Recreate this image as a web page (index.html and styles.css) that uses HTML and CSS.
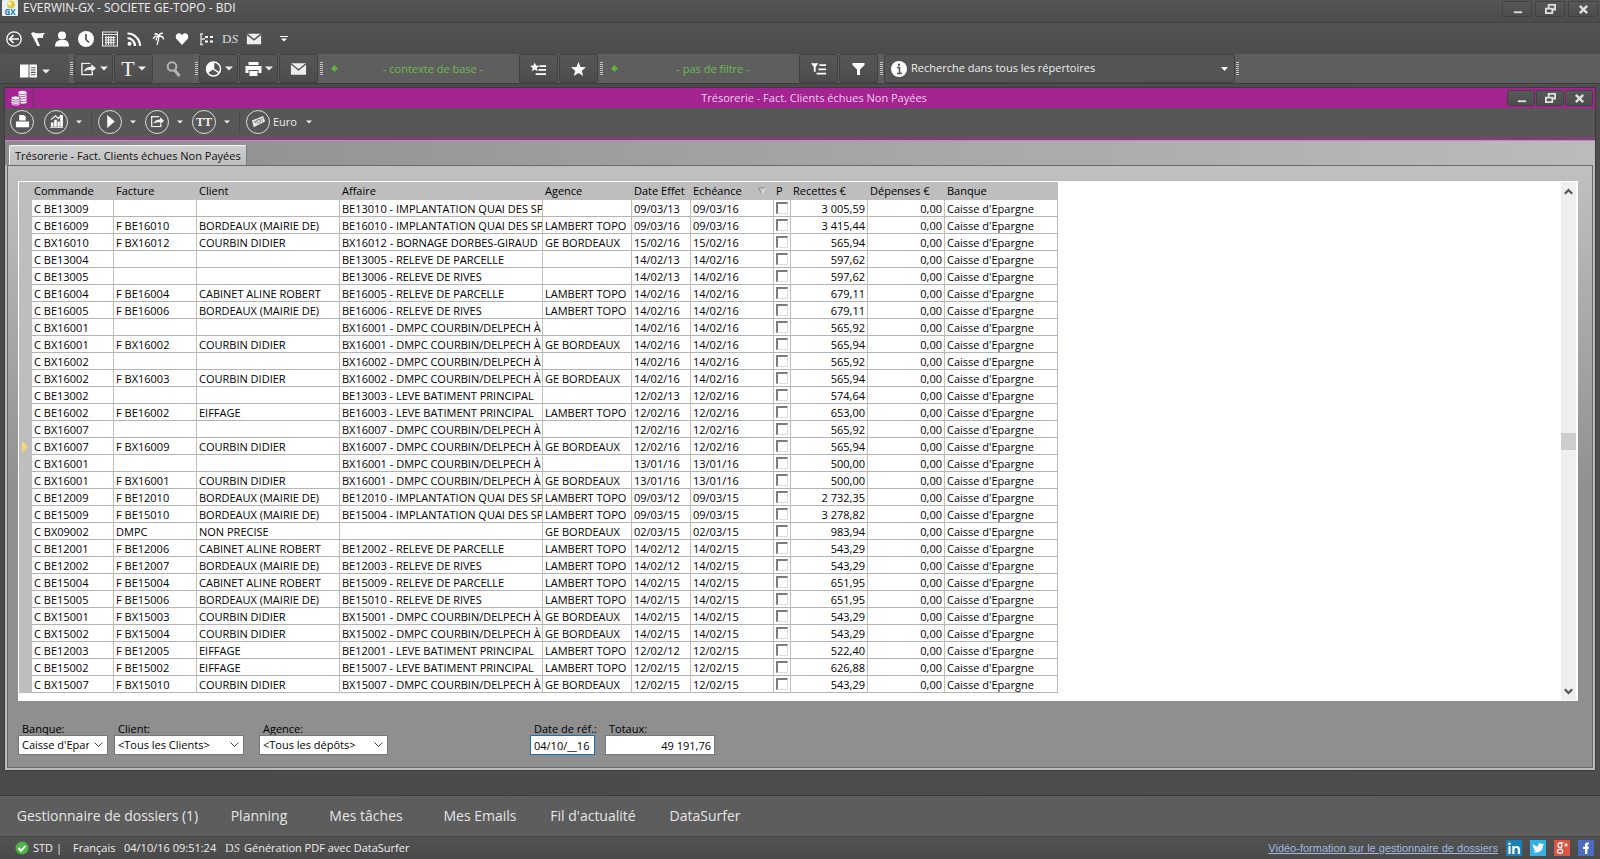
FILE: index.html
```html
<!DOCTYPE html>
<html lang="fr">
<head>
  <meta charset="UTF-8" />
  <meta name="viewport" content="width=device-width, initial-scale=1" />
  <title>EVERWIN-GX - SOCIETE GE-TOPO - BDI</title>
  <link rel="stylesheet" href="styles.css">
</head>
<body>

<svg class="defs" aria-hidden="true">
  <symbol id="i-min" viewBox="0 0 12 12"><path d="M2 8h9v2H2z" fill="currentColor"/></symbol>
  <symbol id="i-restore" viewBox="0 0 12 12"><path d="M4 4V1h7v5H8M1 5h7v5H1z" fill="none" stroke="currentColor" stroke-width="2"/></symbol>
  <symbol id="i-close" viewBox="0 0 12 12"><path d="M2 2l8 8M10 2l-8 8" stroke="currentColor" stroke-width="2.500"/></symbol>
  <symbol id="i-mail" viewBox="0 0 18 14"><path d="M1 1h16v12H1z" fill="currentColor"/><path d="M1 1.500l8 6.500 8-6.500" fill="none" stroke="#505050" stroke-width="1.500"/></symbol>
  <symbol id="i-export" viewBox="0 0 18 14"><path d="M11 1H2v12h11v-3" fill="none" stroke="currentColor" stroke-width="1.500"/><path d="M4 10c1-4 4-5.500 8-5.500V2l5 4.200-5 4.200V8C9 8 6 8 4 10z" fill="currentColor"/></symbol>
  <symbol id="i-caret" viewBox="0 0 8 5"><path d="M0 .5h8L4 4.500z" fill="currentColor"/></symbol>
</svg>

<header class="titlebar">
  <svg class="logo" viewBox="0 0 16 16"><rect width="16" height="16" rx="1" fill="#e9f2f6"/><circle cx="9" cy="4.500" r="4" fill="#e5c93c"/><circle cx="7.500" cy="3.500" r="2" fill="#fbf3b5"/><text x="8" y="15" text-anchor="middle">GX</text></svg>
  <h1>EVERWIN-GX - SOCIETE GE-TOPO - BDI</h1>
  <div class="win-buttons">
    <button aria-label="Réduire"><svg><use href="#i-min"/></svg></button>
    <button aria-label="Restaurer"><svg><use href="#i-restore"/></svg></button>
    <button aria-label="Fermer"><svg><use href="#i-close"/></svg></button>
  </div>
</header>

<nav class="quickbar">
  <button aria-label="Retour"><svg viewBox="0 0 16 16"><circle cx="8" cy="8" r="7.200" fill="none" stroke="#fff" stroke-width="1.300"/><path d="M13 8H4M7.500 4L3.500 8l4 4" fill="none" stroke="#fff" stroke-width="1.700"/></svg></button>
  <button aria-label="Drapeau"><svg viewBox="0 0 16 16"><path d="M1 2.500l2-1.500c3 2 6 1 12.500 1-2 1-3 2.500-2.500 5-2 0-4-1-6 1l3 7H7.500z" fill="#fff"/></svg></button>
  <button aria-label="Contacts"><svg viewBox="0 0 16 16"><circle cx="8" cy="4.500" r="4" fill="#fff"/><path d="M1 15.500c0-5 3-6 5-6.500h4c2 0 5 1 5 6.500z" fill="#fff"/></svg></button>
  <button aria-label="Horloge"><svg viewBox="0 0 16 16"><circle cx="8" cy="8" r="8" fill="#fff"/><path d="M8 3v5.500l3 3" fill="none" stroke="#505050" stroke-width="1.700"/></svg></button>
  <button aria-label="Calendrier"><svg viewBox="0 0 16 16"><path d="M.5 1h15v14H.5zM1 3.500h14M3 6.500h10.500M3 9h10.500M3 11.500h10.500M4 5v9M6.500 5v9M9 5v9M11.500 5v9" fill="none" stroke="#eee" stroke-width="1.200"/></svg></button>
  <button aria-label="Flux"><svg viewBox="0 0 16 16"><circle cx="3.500" cy="12.800" r="2" fill="#fff"/><path d="M1.500 7a8 8 0 0 1 7.500 8M1.500 2.500A12.500 12.500 0 0 1 14 15" fill="none" stroke="#fff" stroke-width="2.200"/></svg></button>
  <button aria-label="Congés"><svg viewBox="0 0 16 16"><path d="M9 5c-.5 4-1 6-2 9M9 5C7 2 5.500 2.500 4.500 3.500M9 5c1-3 3-3 4-2.500M9 5C5.500 4.500 3.500 6 3.500 8M9 5c3 0 4.500 1.500 4.500 3.500M9 5c-2.500 1-3 3-2.500 4.500" fill="none" stroke="#fff" stroke-width="1.300"/></svg></button>
  <button aria-label="Favoris"><svg viewBox="0 0 16 16"><path d="M8 14L2.500 8C0 5 4-.5 8 4c4-4.500 8 1 5.500 4z" fill="#fff"/></svg></button>
  <button aria-label="Arborescence"><svg viewBox="0 0 16 16"><path d="M3 3v11M2 3h3M2 13.500h3M3 8h4" stroke="#ddd" stroke-width="1.300"/><path d="M7 6h3M7 10.500h3M12 6h3M12 10.500h3" stroke="#fff" stroke-width="2"/></svg></button>
  <button class="ds">D<i>S</i></button>
  <button aria-label="Emails"><svg viewBox="0 0 18 14"><use href="#i-mail"/></svg></button>
  <button class="more" aria-label="Personnaliser"><svg viewBox="0 0 8 6"><path d="M0 .5h8" stroke="#fff"/><path d="M1 2.500h6L4 5.500z" fill="#fff"/></svg></button>
</nav>

<div class="toolbar">
  <button class="tool tool-first" aria-label="Volets"><svg class="ico" viewBox="0 0 18 16"><path d="M0 1h9v14H0zM10 1h8v14h-8z" fill="#fff"/><path d="M11.500 4.500h5M11.500 7h5M11.500 9.500h5M11.500 12h5" stroke="#555" stroke-width="1.200"/></svg><svg class="caret"><use href="#i-caret"/></svg></button>
  <span class="grip"></span>
  <button class="tool" aria-label="Exporter"><svg class="ico" viewBox="0 0 18 14"><use href="#i-export"/></svg><svg class="caret"><use href="#i-caret"/></svg></button>
  <button class="tool tool-text" aria-label="Texte">T<svg class="caret"><use href="#i-caret"/></svg></button>
  <button class="tool tool-off" aria-label="Rechercher"><svg class="ico" viewBox="0 0 16 16"><circle cx="6.500" cy="5.500" r="4.300" fill="none" stroke="#b4b4b4" stroke-width="2"/><path d="M9 9l5 6" stroke="#b4b4b4" stroke-width="3"/></svg></button>
  <span class="grip"></span>
  <button class="tool" aria-label="Statistiques"><svg class="ico" viewBox="0 0 16 16"><circle cx="8" cy="8" r="7" fill="#555" stroke="#fff" stroke-width="1.500"/><path d="M8 8V1a7 7 0 0 0-5.500 11z" fill="#fff"/><path d="M8 1v7l6 4" fill="none" stroke="#fff" stroke-width="1.500"/></svg><svg class="caret"><use href="#i-caret"/></svg></button>
  <button class="tool" aria-label="Imprimer"><svg class="ico" viewBox="0 0 16 16"><path d="M3 1h10v3H3zM0 5h16v7h-3V9H3v3H0zM4 10h8v5H4z" fill="#fff"/></svg><svg class="caret"><use href="#i-caret"/></svg></button>
  <button class="tool" aria-label="Envoyer"><svg class="ico" viewBox="0 0 18 14"><use href="#i-mail"/></svg></button>
  <span class="grip"></span>
  <span class="context"><span>- contexte de base -</span></span>
  <button class="tool" aria-label="Liste des contextes"><svg class="ico" viewBox="0 0 18 14"><path d="M5 0l1.400 3.400 3.600.2-2.800 2.300.9 3.600L5 7.500 1.900 9.500l.9-3.600L0 3.600l3.600-.2z" fill="#fff"/><path d="M10 4h7M9 8h8M6 12.500h11" stroke="#fff" stroke-width="1.800"/></svg></button>
  <button class="tool" aria-label="Contexte favori"><svg class="ico" viewBox="0 0 16 16"><path d="M8 1l2 5 5.500.3-4.200 3.500 1.400 5.200L8 12l-4.700 3 1.400-5.200L.5 6.300 6 6z" fill="#fff"/></svg></button>
  <span class="grip"></span>
  <span class="context"><span>- pas de filtre -</span></span>
  <button class="tool" aria-label="Liste des filtres"><svg class="ico" viewBox="0 0 18 14"><path d="M1 1h8L6 5v5H4V5z" fill="#fff"/><path d="M10 3h7M9 7.500h8M7 12h10" stroke="#fff" stroke-width="1.800"/></svg></button>
  <button class="tool" aria-label="Filtrer"><svg class="ico" viewBox="0 0 16 16"><path d="M2 2h12v2l-4.500 4.500V14h-3V8.500L2 4z" fill="#fff"/></svg></button>
  <span class="grip"></span>
  <div class="search">
    <svg class="info" viewBox="0 0 16 16"><circle cx="8" cy="8" r="8" fill="#fff"/><path d="M6 6.500h2.500V12.500M6 12.500h5" fill="none" stroke="#555" stroke-width="1.600"/><circle cx="8" cy="3.700" r="1.200" fill="#555"/></svg>
    <select aria-label="Recherche"><option>Recherche dans tous les répertoires</option></select>
  </div>
  <span class="grip"></span>
</div>

<main class="desktop">
  <section class="window">
    <header class="win-title">
      <span class="coins"><svg viewBox="0 0 18 17"><g fill="#fff" stroke="#9b2790" stroke-width=".8"><path d="M8 3v10c1 2 9 2 9 0V3z"/><ellipse cx="12.500" cy="3" rx="4.500" ry="2"/><path d="M8 5.500c1 2 8 2 9 0M8 8c1 2 8 2 9 0M8 10.500c1 2 8 2 9 0" fill="none"/><path d="M1 8.500v6c1 2.500 9 2.500 9 0v-6z"/><ellipse cx="5.500" cy="8.500" rx="4.500" ry="2"/><path d="M1 11c1 2 8 2 9 0M1 13.300c1 2 8 2 9 0" fill="none"/></g></svg></span>
      <h2>Trésorerie - Fact. Clients échues Non Payées</h2>
      <div class="win-buttons">
        <button aria-label="Réduire"><svg><use href="#i-min"/></svg></button>
        <button aria-label="Restaurer"><svg><use href="#i-restore"/></svg></button>
        <button aria-label="Fermer"><svg><use href="#i-close"/></svg></button>
      </div>
    </header>

    <div class="actions">
      <button class="round" aria-label="Imprimer"><svg viewBox="0 0 16 16"><path d="M4.500 1h5l2 2v4h-7zM1 8h14v6H1z" fill="#fff"/></svg></button>
      <button class="round" aria-label="Graphique"><svg viewBox="0 0 16 16"><path d="M2 9h2.800v4.500H2zM5.500 6h2.800v7.500H5.500zM9 8h2.500v5.500H9zM12 1h2.800v12.500H12zM1 14h14v1H1z" fill="#fff"/><path d="M2 6l5-4 3 3 3-4" fill="none" stroke="#fff" stroke-width="1.200"/></svg></button>
      <button class="drop" aria-label="Plus"><svg class="caret"><use href="#i-caret"/></svg></button>
      <span class="sep"></span>
      <button class="round" aria-label="Lancer"><svg viewBox="0 0 16 16"><path d="M4.500 1l8 7-8 7z" fill="#fff"/></svg></button>
      <button class="drop" aria-label="Plus"><svg class="caret"><use href="#i-caret"/></svg></button>
      <button class="round" aria-label="Exporter"><svg viewBox="0 0 18 14"><use href="#i-export"/></svg></button>
      <button class="drop" aria-label="Plus"><svg class="caret"><use href="#i-caret"/></svg></button>
      <button class="round tt">TT</button>
      <button class="drop" aria-label="Plus"><svg class="caret"><use href="#i-caret"/></svg></button>
      <span class="sep"></span>
      <button class="round" aria-label="Devise"><svg viewBox="0 0 16 16"><path d="M1 7l12-5 2 6-12 6z" fill="#eee"/><path d="M2 9l12-5M4 7l1.500 4M11 4.500l1.500 4" stroke="#777" stroke-width=".7"/><circle cx="8.200" cy="7.700" r="2" fill="none" stroke="#777"/></svg></button>
      <span class="currency">Euro</span>
      <button class="drop" aria-label="Choisir la devise"><svg class="caret"><use href="#i-caret"/></svg></button>
    </div>

    <div class="tabs" role="tablist">
      <button class="tab" role="tab" aria-selected="true">Trésorerie - Fact. Clients échues Non Payées</button>
    </div>

    <div class="panel">
      <div class="grid-box">
        <div class="grid-scroll">
          <table>
            <colgroup>
              <col class="c-mark"><col class="c-cmd"><col class="c-fact"><col class="c-client"><col class="c-aff"><col class="c-agence">
              <col class="c-date"><col class="c-ech"><col class="c-p"><col class="c-amount"><col class="c-amount"><col class="c-bank">
            </colgroup>
            <thead>
              <tr>
                <th></th><th>Commande</th><th>Facture</th><th>Client</th><th>Affaire</th><th>Agence</th><th>Date Effet</th>
                <th><span class="sorted">Echéance<svg viewBox="0 0 8 8"><path d="M.5 1h7L4 7z" fill="#ccc" stroke="#888"/><path d="M7.500 1L4 7" stroke="#fff"/></svg></span></th>
                <th>P</th><th>Recettes €</th><th>Dépenses €</th><th>Banque</th>
              </tr>
            </thead>
            <tbody id="rows"></tbody>
          </table>
        </div>
        <div class="scrollbar">
          <button aria-label="Monter"><svg viewBox="0 0 8 8"><path d="M.7 6L4 2.700 7.300 6" fill="none" stroke="#555" stroke-width="2"/></svg></button>
          <span class="track"></span>
          <span class="thumb"></span>
          <span class="track"></span>
          <button aria-label="Descendre"><svg viewBox="0 0 8 8"><path d="M.7 2L4 5.300 7.300 2" fill="none" stroke="#555" stroke-width="2"/></svg></button>
        </div>
      </div>

      <form class="filters">
        <div class="field f-bank"><label for="banque">Banque:</label><select id="banque"><option>Caisse d'Epargne</option></select></div>
        <div class="field f-client"><label for="client">Client:</label><select id="client"><option>&lt;Tous les Clients&gt;</option></select></div>
        <div class="field f-agence"><label for="agence">Agence:</label><select id="agence"><option>&lt;Tous les dépôts&gt;</option></select></div>
        <div class="field f-date"><label for="date">Date de réf.:</label><input id="date" type="text" value="04/10/__16"></div>
        <div class="field f-total"><label for="total">Totaux:</label><input id="total" type="text" value="49 191,76" readonly></div>
      </form>
    </div>
  </section>
</main>

<nav class="bottom-nav">
  <a href="#">Gestionnaire de dossiers (1)</a>
  <a href="#">Planning</a>
  <a href="#">Mes tâches</a>
  <a href="#">Mes Emails</a>
  <a href="#">Fil d'actualité</a>
  <a href="#">DataSurfer</a>
</nav>

<footer class="status">
  <svg class="ok" viewBox="0 0 14 14"><circle cx="7" cy="7" r="6.500" fill="#4fb446"/><path d="M3.500 7l2.500 2.800 4.500-5" fill="none" stroke="#fff" stroke-width="2"/></svg>
  <span class="std">STD |</span>
  <span class="lang">Français</span>
  <span class="clock">04/10/16 09:51:24</span>
  <span class="ds">D<i>S</i></span>
  <span>Génération PDF avec DataSurfer</span>
  <div class="links">
    <a class="video" href="#">Vidéo-formation sur le gestionnaire de dossiers</a>
    <a href="#" aria-label="LinkedIn"><svg viewBox="0 0 16 16"><path d="M0 0h16v16H0z" fill="#1b7fb8"/><circle cx="3.500" cy="3.800" r="1.300" fill="#fff"/><path d="M2.400 6h2.200v8H2.400zM6.300 6h2.100v1.100C10 5.200 14 5.500 14 9v5h-2.200V9.500c0-2-3.300-2-3.300 0V14H6.300z" fill="#fff"/></svg></a>
    <a href="#" aria-label="Twitter"><svg viewBox="0 0 16 16"><path d="M0 0h16v16H0z" fill="#35b0e6"/><path d="M3 4c1.500 1.600 3 2.300 5 2.400C7.600 3.500 11 2.500 12 4.200L14 3.800l-1 1.700c0 6-6 8.500-10 6.200 1.300 0 2.300-.3 3-.9C4.500 10.500 4 9.800 3.700 9H5C3.300 8.200 3 7 3 6.200l1 .2C2.700 5.500 2.700 4.700 3 4z" fill="#fff"/></svg></a>
    <a href="#" aria-label="Google+"><svg viewBox="0 0 16 16"><path d="M0 0h16v16H0z" fill="#dc5442"/><ellipse cx="6" cy="5.300" rx="2" ry="2.400" fill="none" stroke="#fff" stroke-width="1.200"/><ellipse cx="6" cy="11.300" rx="2.700" ry="2" fill="none" stroke="#fff" stroke-width="1.200"/><path d="M6 2.800h3.500M6.500 7.500c0 1 1 1 1.500 2M10 5h4M12 3v4" fill="none" stroke="#fff"/></svg></a>
    <a href="#" aria-label="Facebook"><svg viewBox="0 0 16 16"><path d="M0 0h16v16H0z" fill="#4c6cc0"/><path d="M7 14V9H5V6.800h2V5c0-2 1.300-2.700 4-2.400v2C9.500 4.500 9.400 4.700 9.400 5.200v1.600H11L10.700 9H9.400v5z" fill="#fff"/></svg></a>
  </div>
</footer>

<script>
  const quai = "IMPLANTATION QUAI DES SPO";
  const dmpc = "DMPC COURBIN/DELPECH À";
  const lt = "LAMBERT TOPO";
  const gb = "GE BORDEAUX";
  const mairie = "BORDEAUX (MAIRIE DE)";
  const courbin = "COURBIN DIDIER";
  const cabinet = "CABINET ALINE ROBERT";

  // commande, facture, client, affaire, agence, date effet, échéance, recettes
  const data = [
    ["C BE13009", "", "", "BE13010 - " + quai, "", "09/03/13", "09/03/16", "3 005,59"],
    ["C BE16009", "F BE16010", mairie, "BE16010 - " + quai, lt, "09/03/16", "09/03/16", "3 415,44"],
    ["C BX16010", "F BX16012", courbin, "BX16012 - BORNAGE DORBES-GIRAUD", gb, "15/02/16", "15/02/16", "565,94"],
    ["C BE13004", "", "", "BE13005 - RELEVE DE PARCELLE", "", "14/02/13", "14/02/16", "597,62"],
    ["C BE13005", "", "", "BE13006 - RELEVE DE RIVES", "", "14/02/13", "14/02/16", "597,62"],
    ["C BE16004", "F BE16004", cabinet, "BE16005 - RELEVE DE PARCELLE", lt, "14/02/16", "14/02/16", "679,11"],
    ["C BE16005", "F BE16006", mairie, "BE16006 - RELEVE DE RIVES", lt, "14/02/16", "14/02/16", "679,11"],
    ["C BX16001", "", "", "BX16001 - " + dmpc, "", "14/02/16", "14/02/16", "565,92"],
    ["C BX16001", "F BX16002", courbin, "BX16001 - " + dmpc, gb, "14/02/16", "14/02/16", "565,94"],
    ["C BX16002", "", "", "BX16002 - " + dmpc, "", "14/02/16", "14/02/16", "565,92"],
    ["C BX16002", "F BX16003", courbin, "BX16002 - " + dmpc, gb, "14/02/16", "14/02/16", "565,94"],
    ["C BE13002", "", "", "BE13003 - LEVE BATIMENT PRINCIPAL", "", "12/02/13", "12/02/16", "574,64"],
    ["C BE16002", "F BE16002", "EIFFAGE", "BE16003 - LEVE BATIMENT PRINCIPAL", lt, "12/02/16", "12/02/16", "653,00"],
    ["C BX16007", "", "", "BX16007 - " + dmpc, "", "12/02/16", "12/02/16", "565,92"],
    ["C BX16007", "F BX16009", courbin, "BX16007 - " + dmpc, gb, "12/02/16", "12/02/16", "565,94"],
    ["C BX16001", "", "", "BX16001 - " + dmpc, "", "13/01/16", "13/01/16", "500,00"],
    ["C BX16001", "F BX16001", courbin, "BX16001 - " + dmpc, gb, "13/01/16", "13/01/16", "500,00"],
    ["C BE12009", "F BE12010", mairie, "BE12010 - " + quai, lt, "09/03/12", "09/03/15", "2 732,35"],
    ["C BE15009", "F BE15010", mairie, "BE15004 - " + quai, lt, "09/03/15", "09/03/15", "3 278,82"],
    ["C BX09002", "DMPC", "NON PRECISE", "", gb, "02/03/15", "02/03/15", "983,94"],
    ["C BE12001", "F BE12006", cabinet, "BE12002 - RELEVE DE PARCELLE", lt, "14/02/12", "14/02/15", "543,29"],
    ["C BE12002", "F BE12007", mairie, "BE12003 - RELEVE DE RIVES", lt, "14/02/12", "14/02/15", "543,29"],
    ["C BE15004", "F BE15004", cabinet, "BE15009 - RELEVE DE PARCELLE", lt, "14/02/15", "14/02/15", "651,95"],
    ["C BE15005", "F BE15006", mairie, "BE15010 - RELEVE DE RIVES", lt, "14/02/15", "14/02/15", "651,95"],
    ["C BX15001", "F BX15003", courbin, "BX15001 - " + dmpc, gb, "14/02/15", "14/02/15", "543,29"],
    ["C BX15002", "F BX15004", courbin, "BX15002 - " + dmpc, gb, "14/02/15", "14/02/15", "543,29"],
    ["C BE12003", "F BE12005", "EIFFAGE", "BE12001 - LEVE BATIMENT PRINCIPAL", lt, "12/02/12", "12/02/15", "522,40"],
    ["C BE15002", "F BE15002", "EIFFAGE", "BE15007 - LEVE BATIMENT PRINCIPAL", lt, "12/02/15", "12/02/15", "626,88"],
    ["C BX15007", "F BX15010", courbin, "BX15007 - " + dmpc, gb, "12/02/15", "12/02/15", "543,29"]
  ];
  const current = 14;

  document.getElementById('rows').innerHTML = data.map((r, i) => {
    const cells = r.slice(0, 7).map(v => `<td>${v}</td>`).join('');
    const mark = i === current ? '<span class="marker"></span>' : '';
    return `<tr><td class="mark">${mark}</td>${cells}` +
      `<td class="check"><input type="checkbox" aria-label="Pointé ${r[0]}"></td>` +
      `<td class="num">${r[7]}</td><td class="num">0,00</td><td>Caisse d'Epargne</td></tr>`;
  }).join('');
</script>
</body>
</html>
```

FILE: styles.css
```css
* {
  box-sizing: border-box;
}

body {
  margin: 0;
  min-height: 100vh;
  display: flex;
  flex-direction: column;
  font-family: "Open Sans", "Noto Sans", sans-serif;
  font-size: 11px;
  line-height: 16px;
  color: #eee;
  background: #4d4d4d;
}

button, input, select {
  font: inherit;
  color: inherit;
  margin: 0;
  padding: 0;
  border: none;
  background: none;
}

h1, h2 {
  margin: 0;
  font-size: 12px;
  font-weight: 400;
}

svg {
  display: block;
}

.defs {
  display: none;
}

/* Barre de titre */
.titlebar {
  height: 23px;
  display: flex;
  align-items: flex-start;
  padding: 0 2px;
  background: linear-gradient(#545454, #4c4c4c);
  border-bottom: 1px solid #424242;
}

.titlebar h1 {
  flex: 1;
  padding-left: 5px;
}

.logo {
  width: 16px;
  height: 16px;
}

.logo text {
  font-size: 8px;
  font-weight: 700;
  fill: #1479b3;
}

.win-buttons {
  display: flex;
  gap: 3px;
  padding-top: 1px;
  color: #e0e0e0;
}

.win-buttons button {
  width: 30px;
  height: 16px;
  display: flex;
  align-items: center;
  justify-content: center;
  border: 1px solid #424242;
  border-radius: 2px;
  background: linear-gradient(#585858, #4c4c4c);
}

.win-buttons svg {
  width: 11px;
  height: 11px;
}

/* Accès rapide */
.quickbar {
  height: 31px;
  display: flex;
  align-items: center;
  padding-left: 2px;
  background: linear-gradient(#535353, #4c4c4c);
}

.quickbar button {
  width: 24px;
  height: 24px;
  display: flex;
  align-items: center;
  justify-content: center;
}

.quickbar svg {
  width: 16px;
  height: 16px;
}

.quickbar .more {
  width: 36px;
}

.quickbar .more svg {
  width: 8px;
  height: 6px;
}

.ds {
  font-family: "Liberation Serif", serif;
  font-size: 12px;
  color: #ddd;
}

.quickbar .ds {
  font-size: 13px;
}

/* Barre d'outils */
.toolbar {
  height: 30px;
  display: flex;
  align-items: stretch;
  background: #5e5e5e;
  border-bottom: 1px solid #3c3c3c;
}

.tool {
  width: 39px;
  margin-right: 1px;
  display: flex;
  align-items: center;
  justify-content: center;
  gap: 3px;
  border: 1px solid #424242;
  border-radius: 2px;
  background: linear-gradient(#575757, #4c4c4c);
}

.tool-first {
  width: 69px;
  margin: 0;
  padding-top: 5px;
  gap: 5px;
  border: none;
  background: linear-gradient(#555, #4f4f4f);
}

.tool-text {
  font-family: "Liberation Serif", serif;
  font-size: 22px;
}

.tool-off {
  border-color: #575757;
  background: #5a5a5a;
}

.ico {
  width: 17px;
  height: 16px;
}

.caret {
  width: 8px;
  height: 5px;
}

.grip {
  width: 3px;
  height: 14px;
  margin: 8px 1px;
  align-self: flex-start;
  background: repeating-linear-gradient(#ccc 0 1px, #555 1px 2px);
}

.context {
  width: 195px;
  display: flex;
  align-items: center;
  padding-left: 8px;
  color: #6dbb4b;
}

.context::before {
  content: "";
  width: 5px;
  height: 5px;
  background: #5cb436;
  transform: rotate(45deg);
}

.context span {
  flex: 1;
  padding-left: 10px;
  text-align: center;
}

.search {
  width: 351px;
  display: flex;
  align-items: center;
  gap: 4px;
  padding: 0 6px;
  border: 1px solid #424242;
  border-radius: 2px;
  background: #545454;
}

.info {
  width: 16px;
  height: 16px;
}

select {
  appearance: none;
  background: no-repeat right center;
  border-radius: 0;
}

.search select {
  flex: 1;
  height: 24px;
  padding-bottom: 1px;
  background-image: url("data:image/svg+xml,%3Csvg xmlns='http://www.w3.org/2000/svg' width='7' height='4'%3E%3Cpath d='M0 0h7L3.500 4z' fill='%23fff'/%3E%3C/svg%3E");
}

/* Fenêtre */
.desktop {
  flex: 1;
  display: flex;
  padding: 3px 4px 24px;
  border-bottom: 1px solid #3a3a3a;
  background: linear-gradient(90deg, #4a4a4a, #4d4d4d);
}

.window {
  flex: 1;
  min-width: 0;
  display: flex;
  flex-direction: column;
  border: 1px solid #3c3c3c;
  background: #bbb;
}

.win-title {
  height: 20px;
  display: grid;
  grid-template-columns: 28px 1fr auto 1fr;
  padding: 0 2px;
  background: #a32390;
  color: #f2cdec;
}

.win-title h2 {
  grid-column: 3;
  font-size: 11px;
  line-height: 20px;
}

.coins {
  padding-left: 3px;
  border-right: 3px solid #8a2d7d;
}

.coins svg {
  width: 18px;
  height: 18px;
  margin-top: 1px;
}

.win-title .win-buttons {
  justify-self: end;
  gap: 1px;
  padding-top: 2px;
}

.win-title .win-buttons button {
  width: 28px;
}

.actions {
  height: 32px;
  display: flex;
  align-items: center;
  padding: 0 5px 2px;
  background: #575757;
  border-bottom: 3px solid #7d3f75;
}

.round {
  width: 24px;
  height: 24px;
  display: flex;
  align-items: center;
  justify-content: center;
  border: 1px solid #ddd;
  border-radius: 50%;
}

.round + .round {
  margin-left: 10px;
}

.round svg {
  width: 15px;
  height: 15px;
}

.round.tt {
  font-family: "Liberation Serif", serif;
  font-size: 12px;
  font-weight: 700;
}

.drop {
  width: 23px;
  height: 24px;
  display: flex;
  align-items: center;
  justify-content: center;
  padding-right: 2px;
}

.drop .caret {
  width: 6px;
  height: 4px;
}

.sep {
  width: 7px;
  height: 22px;
  border-left: 1px solid #4a4a4a;
}

.currency {
  padding: 0 2px 0 3px;
}

.tabs {
  height: 25px;
  padding: 4px 4px 0;
  background: linear-gradient(90deg, #8c8c8c, #bbb);
  border-top: 1px solid #b98fb3;
}

.tab {
  height: 20px;
  padding: 0 5px;
  color: #111;
  background: linear-gradient(#cfcfcf, #bebebe);
  border: 1px solid #6f8080;
  border-top-color: #f4f4f4;
  border-left-color: #f4f4f4;
  border-bottom: none;
  border-radius: 2px 2px 0 0;
}

.panel {
  flex: 1;
  margin: 0 2px 2px;
  padding: 15px 14px 12px 10px;
  display: flex;
  flex-direction: column;
  color: #000;
  background: linear-gradient(#bfbfbf, #bdbdbd 4%, #8f8f8f 55%);
  border: 1px solid #6a6a6a;
}

/* Grille */
.grid-box {
  flex: 1;
  min-height: 519px;
  display: flex;
  background: #fff;
  border: 1px solid #fff;
}

.grid-scroll {
  flex: 1;
  min-width: 0;
  overflow: hidden;
}

table {
  width: 1039px;
  table-layout: fixed;
  border-collapse: separate;
  border-spacing: 0;
}

.c-mark { width: 13px; }
.c-cmd { width: 82px; }
.c-fact { width: 83px; }
.c-client { width: 143px; }
.c-aff { width: 203px; }
.c-agence { width: 89px; }
.c-date { width: 59px; }
.c-ech { width: 83px; }
.c-p { width: 17px; }
.c-amount { width: 77px; }
.c-bank { width: 113px; }

th {
  height: 18px;
  padding: 0 2px;
  text-align: left;
  font-weight: 400;
  white-space: nowrap;
  background: #bebebe;
}

.sorted {
  display: flex;
  align-items: center;
  justify-content: space-between;
  padding-right: 6px;
}

.sorted svg {
  width: 8px;
  height: 8px;
}

td {
  height: 17px;
  padding: 1px 2px 0;
  line-height: 15px;
  overflow: hidden;
  white-space: nowrap;
  border-right: 1px solid #c0bfb6;
  border-bottom: 1px solid #b4b4b4;
}

td.num {
  text-align: right;
}

td.mark {
  padding: 0;
  background: #bebebe;
  border: none;
}

.marker {
  display: block;
  margin-left: 3px;
  width: 6px;
  border: 6px solid transparent;
  border-left-color: #f5d77a;
  border-right: none;
}

td.check {
  padding: 0 0 0 2px;
  line-height: 0;
}

.check input {
  appearance: none;
  display: block;
  width: 12px;
  height: 12px;
  border: 1px solid #ddd;
  border-top: 2px solid #7c7c7c;
  border-left: 2px solid #7c7c7c;
}

.scrollbar {
  width: 15px;
  margin-right: 1px;
  display: flex;
  flex-direction: column;
  background: #efefef;
}

.scrollbar button {
  height: 18px;
  display: flex;
  align-items: center;
  justify-content: center;
}

.scrollbar svg {
  width: 9px;
  height: 9px;
}

.thumb {
  height: 17px;
  background: #cdcdcd;
}

.track {
  flex: 1;
}

/* Filtres */
.filters {
  display: flex;
  margin-top: 20px;
}

.field {
  display: flex;
  flex-direction: column;
}

.field label {
  height: 14px;
  padding-left: 4px;
  line-height: 16px;
  white-space: nowrap;
}

.field select,
.field input {
  width: 100%;
  height: 20px;
  padding: 0 3px;
  background-color: #fff;
  border: 1px solid #777;
}

.field select {
  padding-right: 18px;
  text-overflow: clip;
  background-position: right 4px center;
  background-image: url("data:image/svg+xml,%3Csvg xmlns='http://www.w3.org/2000/svg' width='9' height='6'%3E%3Cpath d='M.5.500l4 4 4-4' fill='none' stroke='%23444'/%3E%3C/svg%3E");
}

.f-bank { width: 90px; margin-right: 6px; }
.f-client { width: 130px; margin-right: 15px; }
.f-agence { width: 129px; margin-right: 142px; }
.f-date { width: 65px; margin-right: 10px; }
.f-total { width: 110px; }

.field #date {
  border-color: #1673b8;
}

.field #total {
  text-align: right;
}

/* Bas de page */
.bottom-nav {
  height: 41px;
  display: grid;
  grid-template-columns: 215px 88px 126px 102px 124px 100px;
  align-items: center;
  justify-items: center;
  background: #5d5d5d;
  border-bottom: 1px solid #444;
}

.bottom-nav a {
  color: #e6e6e6;
  font-size: 14px;
  line-height: 20px;
  white-space: nowrap;
  text-decoration: none;
}

.status {
  height: 22px;
  display: flex;
  align-items: center;
  padding: 0 6px 0 15px;
  background: linear-gradient(#525252, #4a4a4a);
}

.ok {
  width: 14px;
  height: 14px;
  margin-right: 4px;
}

.std { width: 40px; }
.lang { width: 51px; }
.clock { width: 101px; }

.status .ds {
  width: 19px;
}

.links {
  margin-left: auto;
  display: flex;
  align-items: center;
  gap: 8px;
}

.links svg {
  width: 16px;
  height: 16px;
}

.video {
  font-family: "Liberation Sans", sans-serif;
  color: #a3b8dc;
}
```
